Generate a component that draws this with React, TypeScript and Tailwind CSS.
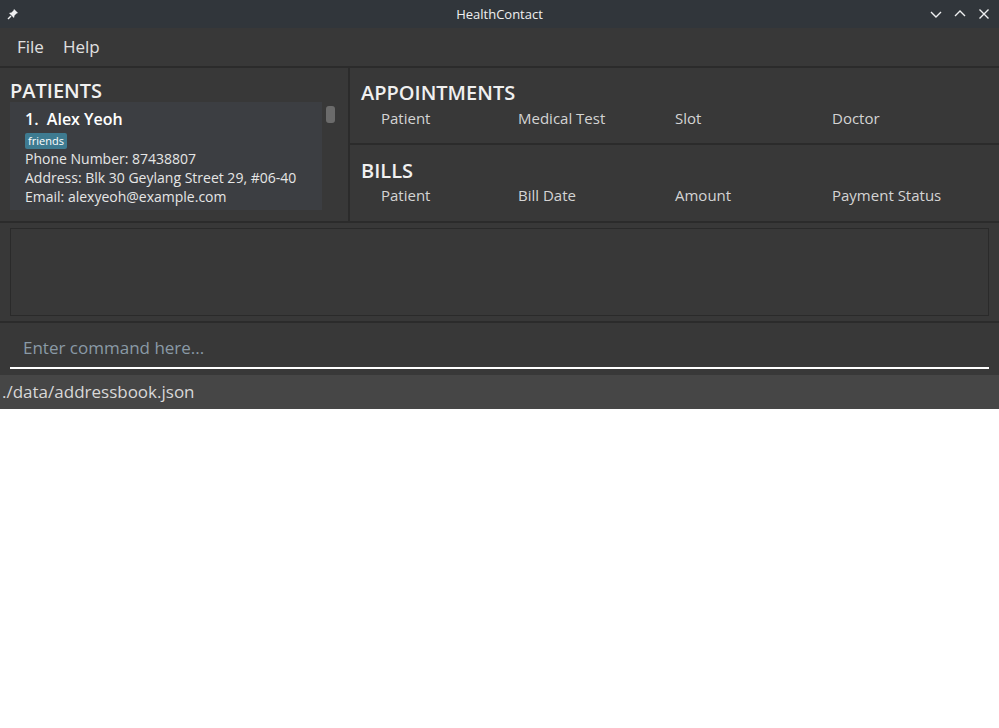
import React from "react";

const font = { fontFamily: '"Open Sans", "Noto Sans", sans-serif' };

function TitleBar() {
  return (
    <div className="relative flex h-[28px] items-center bg-[#31363b] text-[#eff0f1]">
      <svg className="ml-[7px]" width="12" height="12" viewBox="0 0 12 12">
        <path d="M7 1 L11 5 L9.5 5.5 L7.5 7.5 L7 10 L2 5 L4.5 4.5 L6.5 2.5 Z" fill="#eff0f1" />
        <path d="M4 8 L1 11" stroke="#eff0f1" strokeWidth="1.4" />
      </svg>
      <div className="absolute left-0 right-0 top-0 flex h-[28px] items-center justify-center pt-[1px] text-[13px]">HealthContact</div>
      <div className="ml-auto mr-[8px] flex items-center gap-[10px]">
        <svg width="14" height="14" viewBox="0 0 14 14"><path d="M2 5 L7 10 L12 5" stroke="#eff0f1" strokeWidth="1.4" fill="none" /></svg>
        <svg width="14" height="14" viewBox="0 0 14 14"><path d="M2 9 L7 4 L12 9" stroke="#eff0f1" strokeWidth="1.4" fill="none" /></svg>
        <svg width="14" height="14" viewBox="0 0 14 14"><path d="M2.5 2.5 L11.5 11.5 M11.5 2.5 L2.5 11.5" stroke="#eff0f1" strokeWidth="1.4" fill="none" /></svg>
      </div>
    </div>
  );
}

function Columns({ cols, top }: { cols: string[]; top: boolean }) {
  return (
    <div className={top ? "mt-[2px] flex pl-[20px] text-[15px] leading-[20px] text-[#d4d4d4]" : "mt-[1px] flex pl-[20px] text-[15px] leading-[20px] text-[#d4d4d4]"}>
      {cols.map((c, i) => (
        <div key={c} className={i === 0 ? "w-[137px]" : "w-[157px]"}>{c}</div>
      ))}
    </div>
  );
}

export default function App() {
  return (
    <div className="min-h-[728px] w-[999px] bg-white" style={font}>
      <TitleBar />
      <div className="flex h-[38px] items-center gap-[19px] bg-[#383838] pl-[17px] text-[17px] text-[#e0e0e0]">
        <span>File</span>
        <span>Help</span>
      </div>
      <div className="flex flex-col gap-[2px] bg-[#2b2b2b] pt-[2px]">
        <div className="flex h-[153px] gap-[2px]">
          <div className="flex w-[348px] shrink-0 flex-col bg-[#383838] pl-[10px]">
            <div className="pt-[12px] text-[20px] font-semibold leading-[22px] text-[#f0f0f0]">PATIENTS</div>
            <div className="flex">
              <div className="h-[108px] w-[312px] overflow-hidden bg-[#3c3e42] pl-[15px] pt-[6px] text-[#e6e6e6]">
                <div className="text-[16px] font-semibold leading-[22px] text-white">1.&nbsp; Alex Yeoh</div>
                <div className="mt-[3px] flex">
                  <span className="rounded-[2px] bg-[#3e7b91] px-[3px] text-[11px] leading-[16px] text-white">friends</span>
                </div>
                <div className="text-[14px] leading-[19px]">Phone Number: 87438807</div>
                <div className="text-[14px] leading-[19px]">Address: Blk 30 Geylang Street 29, #06-40</div>
                <div className="text-[14px] leading-[19px]">Email: alexyeoh@example.com</div>
              </div>
              <div className="ml-[4px] mt-[4px] h-[17px] w-[9px] rounded-[3px] bg-[#6b6b6b]" />
            </div>
          </div>
          <div className="flex flex-1 flex-col gap-[2px]">
            <div className="flex h-[75px] flex-col bg-[#383838] pl-[11px] pt-[12px]">
              <div className="text-[20px] font-semibold leading-[26px] text-[#f0f0f0]">APPOINTMENTS</div>
              <Columns top cols={["Patient", "Medical Test", "Slot", "Doctor"]} />
            </div>
            <div className="flex flex-1 flex-col bg-[#383838] pl-[11px] pt-[13px]">
              <div className="text-[20px] font-semibold leading-[26px] text-[#f0f0f0]">BILLS</div>
              <Columns top={false} cols={["Patient", "Bill Date", "Amount", "Payment Status"]} />
            </div>
          </div>
        </div>
        <div className="h-[98px] bg-[#383838] px-[10px] pt-[5px]">
          <div className="h-[88px] border border-[#2a2a2a] bg-[#383838]" />
        </div>
        <div className="flex h-[52px] flex-col justify-end bg-[#383838] px-[10px] pb-[6px]">
          <div className="border-b-2 border-white pb-[8px] pl-[13px] text-[17px] leading-[22px] text-[#8a9aa6]">Enter command here...</div>
        </div>
      </div>
      <div className="flex h-[34px] items-center bg-[#464646] pl-[2px] text-[17px] text-[#d8d8d8]">./data/addressbook.json</div>
    </div>
  );
}
